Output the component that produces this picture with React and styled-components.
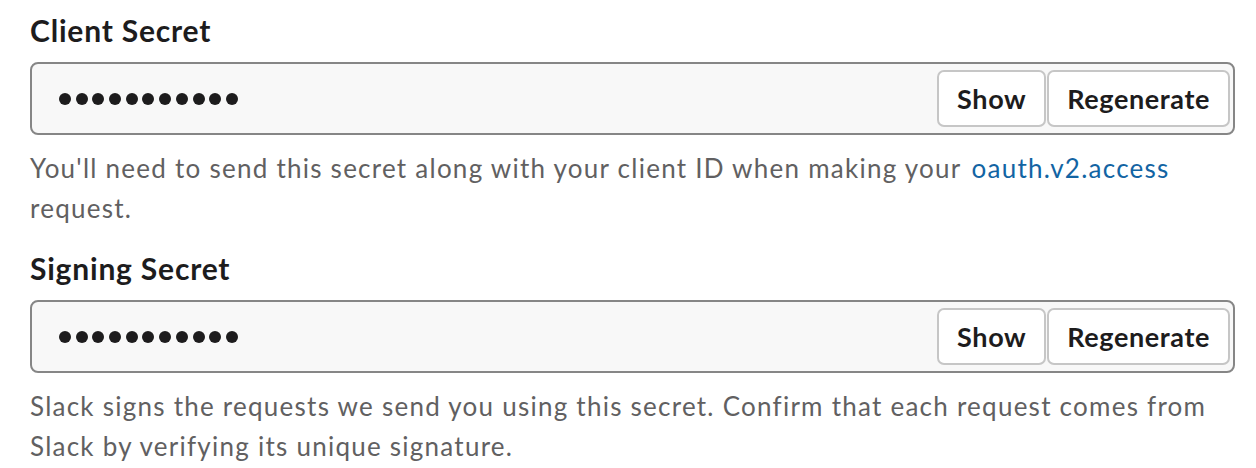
import React from "react";
import styled, { createGlobalStyle } from "styled-components";

const GlobalStyle = createGlobalStyle`
  body {
    margin: 0;
    background: #ffffff;
    font-family: "Lato", "Noto Sans", "Liberation Sans", sans-serif;
  }
`;

const Page = styled.div`
  width: 1205px;
  padding: 12px 0 0 30px;
  display: flex;
  flex-direction: column;
  gap: 22px;
`;

const Section = styled.section`
  display: flex;
  flex-direction: column;
`;

const Heading = styled.h3`
  margin: 0;
  font-size: 30px;
  line-height: 36px;
  font-weight: 700;
  letter-spacing: 0.8px;
  color: #1d1c1d;
`;

const Field = styled.div`
  margin-top: 14px;
  box-sizing: border-box;
  height: 73px;
  display: flex;
  align-items: center;
  padding: 0 3px 0 27px;
  background: #f8f8f8;
  border: 2px solid #868686;
  border-radius: 8px;
`;

const Mask = styled.div`
  flex: 1;
  display: flex;
  gap: 4.7px;
`;

const Dot = styled.span`
  width: 12px;
  height: 12px;
  border-radius: 50%;
  background: #1d1c1d;
`;

const Actions = styled.div`
  display: flex;
  gap: 1px;
`;

const Button = styled.button`
  box-sizing: border-box;
  height: 57px;
  padding: 0 18px;
  background: #ffffff;
  border: 2px solid #c6c6c6;
  border-radius: 7px;
  font-family: "Lato", "Noto Sans", sans-serif;
  font-size: 27px;
  font-weight: 700;
  letter-spacing: 0.6px;
  color: #1d1c1d;
  cursor: pointer;
`;

const Help = styled.p`
  margin: 13px 0 0;
  font-size: 26px;
  line-height: 40px;
  letter-spacing: 1.25px;
  color: #616061;
`;

const Link = styled.a`
  margin-left: 10px;
  color: #1264a3;
  text-decoration: none;
`;

const SecretField = () => (
  <Field>
    <Mask>
      {Array.from({ length: 11 }).map((_, i) => (
        <Dot key={i} />
      ))}
    </Mask>
    <Actions>
      <Button>Show</Button>
      <Button>Regenerate</Button>
    </Actions>
  </Field>
);

export default function App() {
  return (
    <>
      <GlobalStyle />
      <Page>
        <Section>
          <Heading>Client Secret</Heading>
          <SecretField />
          <Help>
            You'll need to send this secret along with your client ID when making your
            <Link href="#">oauth.v2.access</Link> request.
          </Help>
        </Section>
        <Section>
          <Heading>Signing Secret</Heading>
          <SecretField />
          <Help>
            Slack signs the requests we send you using this secret. Confirm that each request comes from
            Slack by verifying its unique signature.
          </Help>
        </Section>
      </Page>
    </>
  );
}
